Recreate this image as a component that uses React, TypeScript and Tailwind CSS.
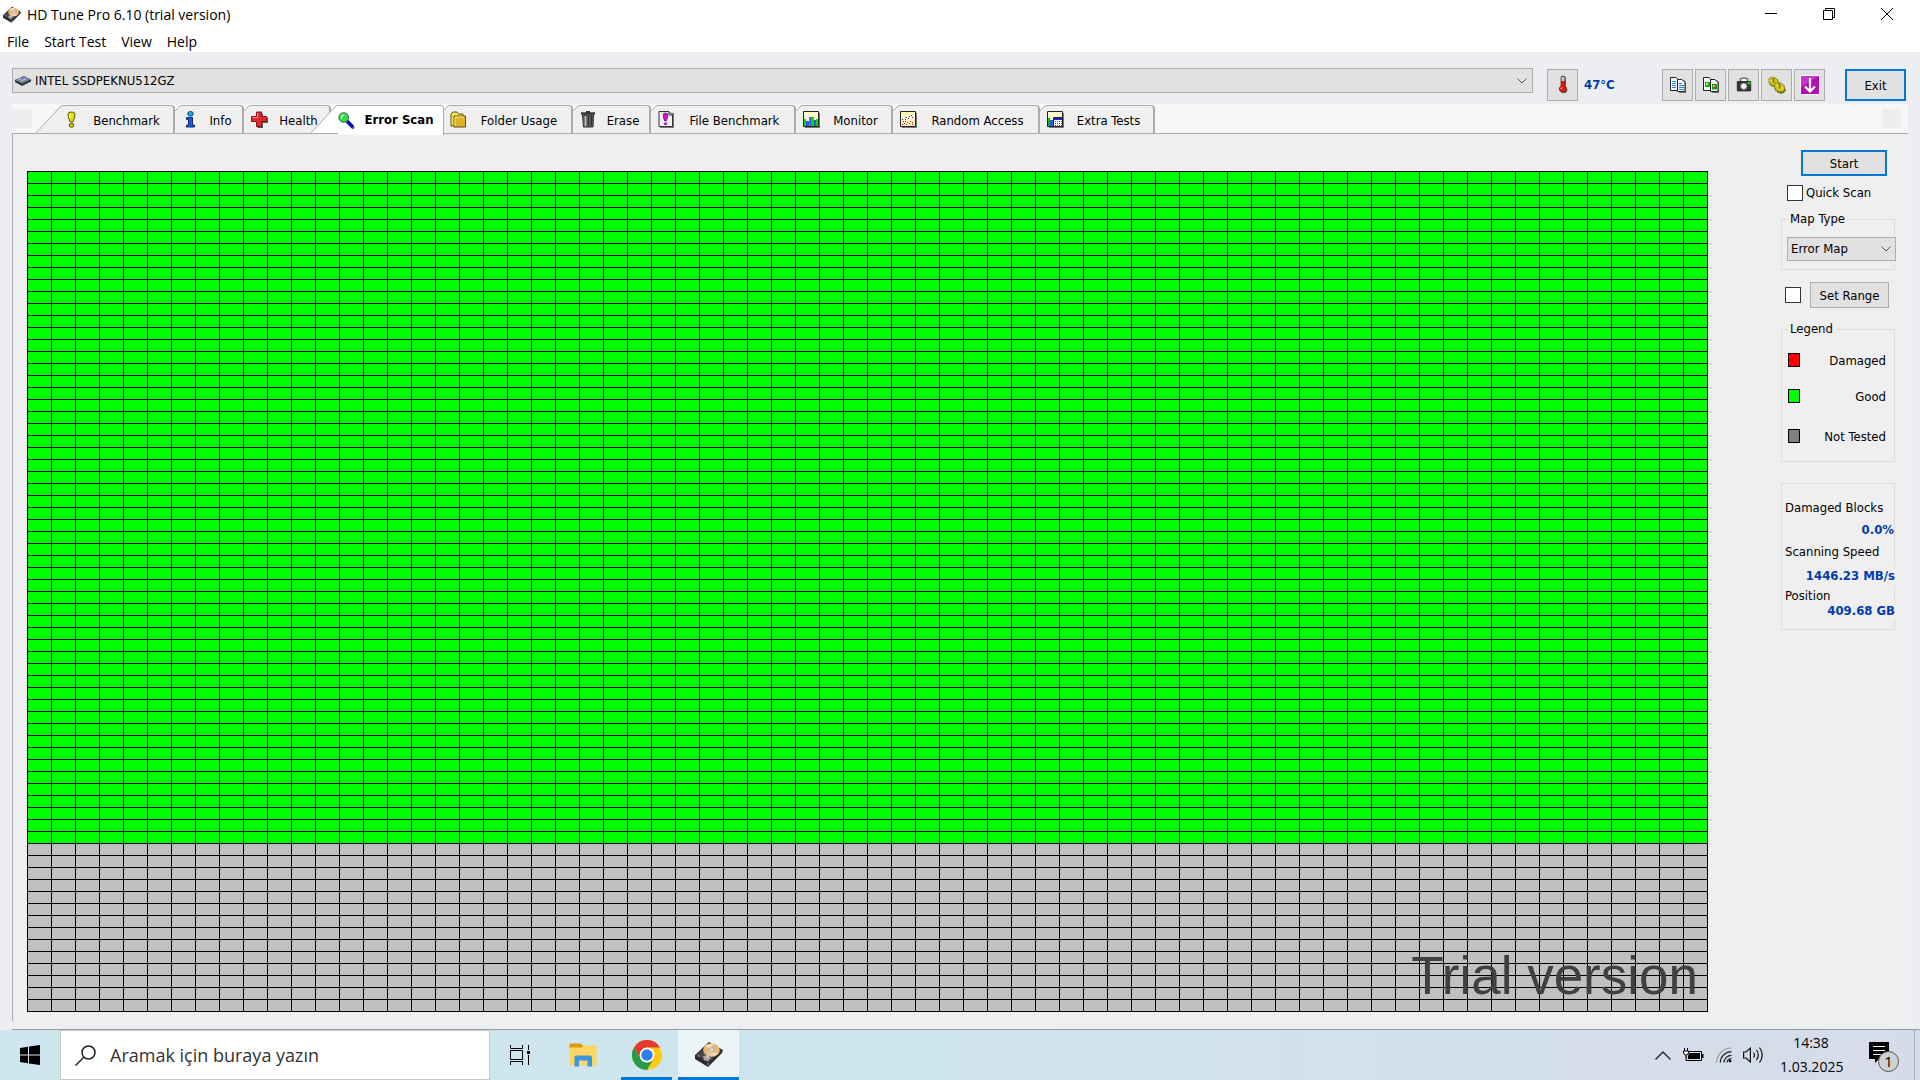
import type { ReactNode } from 'react'
import { clsx } from 'clsx'

/* ---------- Icons ---------- */

function DiskIcon({ className }: { className: string }) {
    return (
        <svg viewBox="0 0 28 26" className={className} aria-hidden="true">
            <path d="M0 14 L14 1 L28 9 L27 12 L13 26 L0 18 Z" fill="#2b2a2c" />
            <path d="M1 14 L14 2 L27 9 L13 22 Z" fill="#4a4648" />
            <ellipse cx="16.5" cy="9" rx="8.3" ry="6.6" fill="#e9b877" />
            <path d="M16.5 9 L10 5 A8.3 6.6 0 0 1 18 2.5 Z" fill="#f8dcae" />
            <path d="M16.5 9 L23 13 A8.3 6.6 0 0 1 15 15.5 Z" fill="#f6d6a0" />
            <ellipse cx="16.5" cy="9" rx="2.8" ry="2.4" fill="#d5d3d1" stroke="#9b8d80" strokeWidth="0.6" />
            <path d="M8 15 L13 14 L16 17 L13 20 L9 19 Z" fill="#a9a6a6" />
            <path d="M12 17 L15 10" stroke="#d8d8d8" strokeWidth="1.4" />
            <circle cx="3.5" cy="15" r="0.8" fill="#bbb" />
            <circle cx="13" cy="23" r="0.8" fill="#bbb" />
        </svg>
    )
}

function DriveIcon() {
    return (
        <svg viewBox="0 0 16 12" className="h-3 w-4 shrink-0" aria-hidden="true">
            <path d="M0 5 L9 1 L16 4.5 L16 6.5 L7 11 L0 7 Z" fill="#2d2f33" />
            <path d="M0 5 L9 1 L16 4.5 L7 8.5 Z" fill="#76839a" />
            <path d="M3 5 L6 3.6 M6 6 L11 3.6" stroke="#a9c0e4" strokeWidth="1.2" />
        </svg>
    )
}

function TabIcon({ children }: { children: ReactNode }) {
    return (
        <svg viewBox="0 0 17 17" className="h-[17px] w-[17px] shrink-0" aria-hidden="true">
            {children}
        </svg>
    )
}

const benchmarkIcon = (
    <TabIcon>
        <path d="M5 3 Q5 1 8.5 1 Q12 1 12 3 Q12 7 9.8 11 L7.2 11 Q5 7 5 3 Z" fill="#e4e000" stroke="#5b5a10" />
        <ellipse cx="8.5" cy="14.2" rx="2.4" ry="2" fill="#c9c400" stroke="#5b5a10" />
        <path d="M7 3 V7" stroke="#fffcb0" strokeWidth="1.4" />
    </TabIcon>
)

const infoIcon = (
    <TabIcon>
        <ellipse cx="8.5" cy="2.8" rx="2.7" ry="2.3" fill="#12b4f0" stroke="#173a68" />
        <path d="M4.5 6.5 H10.5 V14 H12.5 V16 H4.5 V14 H6.5 V8.5 H4.5 Z" fill="#0a5cf0" stroke="#122c60" />
    </TabIcon>
)

const healthIcon = (
    <TabIcon>
        <path d="M6.5 2.5 H12 V6.5 H17 V12 H12 V17 H6.5 Z" fill="#5a5a5a" />
        <path d="M5.5 1 H10.5 V5.5 H15.5 V10.5 H10.5 V15.5 H5.5 V10.5 H0.5 V5.5 H5.5 Z" fill="#e02a30" stroke="#8d1216" />
        <path d="M6.5 2 V6.5 H1.5" stroke="#f58a8a" fill="none" />
    </TabIcon>
)

const scanIcon = (
    <TabIcon>
        <path d="M9.5 10.5 L16 16.5" stroke="#666" strokeWidth="3" />
        <path d="M9 9 L15 15" stroke="#0a12b0" strokeWidth="3.4" />
        <circle cx="5.7" cy="5.5" r="4.8" fill="#35dd48" stroke="#35663b" />
        <path d="M2.5 6 Q3 2.5 6.5 2.2 L3.5 7 Z" fill="#c5ffcb" />
    </TabIcon>
)

const folderIcon = (
    <TabIcon>
        <path d="M1 3 L3 1 H7 L8.5 3 H13 V15 H1 Z" fill="#f5e860" stroke="#615212" />
        <path d="M4 5 H15.5 V16 H4 Z" fill="#ddb32a" stroke="#5c4a10" />
        <path d="M5 15 V6 H14" stroke="#fbe67a" fill="none" />
    </TabIcon>
)

const eraseIcon = (
    <TabIcon>
        <path d="M1 2.5 H15" stroke="#333" strokeWidth="2.4" />
        <path d="M6 1 H10" stroke="#333" strokeWidth="2" />
        <path d="M2.5 4 H13.5 L13 16 H3.5 Z" fill="#686868" stroke="#2e2e2e" />
        <path d="M5.5 5 V15" stroke="#c4c4c4" strokeWidth="1.4" />
        <path d="M8.5 5 V15 M11.5 5 V15" stroke="#333" strokeWidth="1.4" />
    </TabIcon>
)

const fileBenchmarkIcon = (
    <TabIcon>
        <path d="M2 2 H16 V17 H2 Z" fill="#777" />
        <path d="M1 0.5 H11 L14.5 4 V15.5 H1 Z" fill="#f2f2f2" stroke="#333" />
        <path d="M11 1 V4 H14" stroke="#333" fill="none" />
        <path d="M5.2 4 Q5.2 2 7.5 2 Q9.8 2 9.8 4 Q9.8 7 8.3 10 H6.7 Q5.2 7 5.2 4 Z" fill="#d010cf" stroke="#5d0c5d" strokeWidth="0.7" />
        <ellipse cx="7.5" cy="12.8" rx="1.8" ry="1.2" fill="#b00caf" />
    </TabIcon>
)

const monitorIcon = (
    <TabIcon>
        <path d="M2 2 H17 V17 H2 Z" fill="#777" />
        <path d="M0.5 0.5 H15.5 V15.5 H0.5 Z" fill="#fffbd0" stroke="#222" />
        <path d="M1 8 H3 V11 H6 V15 H1 Z" fill="#00e000" />
        <path d="M3 10 H6 V15 H3 Z" fill="#3454f0" />
        <path d="M6 6 H11 V15 H6 Z" fill="#00e000" />
        <path d="M7 6 H8 V15 H7 Z M11 9 H13 V15 H11 Z" fill="#3454f0" />
        <path d="M13 8 H15 V15 H13 Z" fill="#00e000" />
    </TabIcon>
)

const randomIcon = (
    <TabIcon>
        <path d="M2 2 H17 V17 H2 Z" fill="#777" />
        <path d="M0.5 0.5 H15.5 V15.5 H0.5 Z" fill="#fff6c0" stroke="#222" />
        <path d="M2 8.500 H3 M3 10.500 H4 M5 8.500 H6 M6 6.500 H7 M8 7.500 H9 M9 5.500 H10 M11 4.500 H12 M12 6.500 H13 M5 10.500 H6" stroke="#2020f0" />
        <path d="M2 13.500 H3 M4 12.500 H5 M6 13.500 H7 M7 11.500 H8 M9 12.500 H10 M10 10.500 H11 M12 11.500 H13 M12 13.500 H13" stroke="#f01010" />
    </TabIcon>
)

const extraIcon = (
    <TabIcon>
        <path d="M2 2 H17 V17 H2 Z" fill="#777" />
        <path d="M0.5 0.5 H15.5 V15.5 H0.5 Z" fill="#fffbd0" stroke="#222" />
        <path d="M1 7 H3 V15 H1 Z" fill="#00c800" />
        <path d="M3 9 H6 V15 H3 Z" fill="#3454f0" />
        <path d="M6.5 6.5 H15.5 V15.5 H6.5 Z" fill="#fff" stroke="#222" />
        <path d="M7 7 H15 V9 H7 Z" fill="#1a24e0" />
        <path d="M8 10.500 H15 M8 12.500 H15 M8 14.500 H15" stroke="#e02020" strokeDasharray="1 1" />
    </TabIcon>
)

function ToolIcon({ children }: { children: ReactNode }) {
    return (
        <svg viewBox="0 0 20 20" className="h-5 w-5" aria-hidden="true">
            {children}
        </svg>
    )
}

const thermometerIcon = (
    <ToolIcon>
        <path d="M9 3 Q9 1.5 11 1.5 Q13 1.5 13 3 V12 Q15 13.5 14.4 16 Q13.5 18.3 11 18.3 Q7 18 7 15 Q7 13 9 12 Z" fill="#666" />
        <path d="M8 2.5 Q8 1 10 1 Q12 1 12 2.5 V11 Q14 12.5 13.5 15 Q12.6 17.3 10 17.3 Q6.5 17 6.2 14 Q6.2 12 8 11 Z" fill="#f01010" stroke="#442" strokeWidth="0.8" />
        <path d="M8.6 2 H11.4 V6 H8.6 Z" fill="#7fe6ea" />
        <path d="M8 14 L9 12.5" stroke="#ffd0d0" strokeWidth="1.2" />
    </ToolIcon>
)

const copyTextIcon = (
    <ToolIcon>
        <path d="M2.5 2.5 H8 L10.5 5 V15.5 H2.5 Z" fill="#f4faff" stroke="#222" />
        <path d="M4 6.5 H8 M4 8.5 H8 M4 10.5 H8 M4 12.5 H8" stroke="#1f7fe0" />
        <path d="M10 5 L16 5 L18 7 V18 H11" fill="#777" />
        <path d="M9.5 4.5 H14 L17 7.5 V16.5 H9.5 Z" fill="#f4faff" stroke="#222" />
        <path d="M11 8.5 H14 M11 10.5 H16 M11 12.5 H16 M11 14.5 H16" stroke="#1f7fe0" />
    </ToolIcon>
)

const copyImageIcon = (
    <ToolIcon>
        <path d="M2.5 2.5 H8 L10.5 5 V15.5 H2.5 Z" fill="#f4faff" stroke="#222" />
        <path d="M4 7 H9 V12 H4 Z" fill="#12b41a" />
        <path d="M5 8 H7 V10 H5 Z" fill="#e8e020" />
        <path d="M10 5 L16 5 L18 7 V18 H11" fill="#777" />
        <path d="M9.5 4.5 H14 L17 7.5 V16.5 H9.5 Z" fill="#f4faff" stroke="#222" />
        <path d="M11 9 H16 V14.5 H11 Z" fill="#12a01a" />
        <path d="M12 10 H14 V12 H12 Z" fill="#f0c020" />
        <path d="M13 12 H14 V13 H13 Z" fill="#e02010" />
    </ToolIcon>
)

const cameraIcon = (
    <ToolIcon>
        <path d="M2 6.5 H6 V3.5 Q6 2 10 2 Q14 2 14 3.5 V6.5 H18 V17 H2 Z" fill="#fff" />
        <path d="M6.5 6 V4 Q10 1.8 13.5 4 V6" fill="none" stroke="#555" strokeWidth="1.4" />
        <rect x="2.7" y="6" width="14.6" height="10.4" rx="1" fill="#333" />
        <circle cx="9.8" cy="11.3" r="3.2" fill="#f4f4f4" stroke="#777" />
        <rect x="13.5" y="7" width="3" height="2.4" fill="#13d313" />
    </ToolIcon>
)

const optionsIcon = (
    <ToolIcon>
        <ellipse cx="7" cy="7.500" rx="5" ry="4" transform="rotate(35 7 7.500)" fill="#77730c" stroke="#5c570c" strokeDasharray="2 1" />
        <ellipse cx="6.500" cy="6.500" rx="5" ry="4" transform="rotate(35 6.500 6.500)" fill="#d0c810" stroke="#77730c" strokeDasharray="1.500 1" />
        <ellipse cx="13" cy="13.500" rx="5.500" ry="4.200" transform="rotate(35 13 13.500)" fill="#77730c" stroke="#5c570c" strokeDasharray="2 1" />
        <ellipse cx="12.500" cy="12.300" rx="5.500" ry="4.200" transform="rotate(35 12.500 12.300)" fill="#d0c810" stroke="#77730c" strokeDasharray="1.500 1" />
        <path d="M6.5 3 V8 M12.5 8 V13.500" stroke="#6c6c60" strokeWidth="1.6" />
        <path d="M3.5 6 H5 M9.5 11 H11 M14.5 13 H16" stroke="#fff9a0" strokeWidth="1.2" />
    </ToolIcon>
)

const saveIcon = (
    <ToolIcon>
        <rect x="0.5" y="0.5" width="19" height="19" rx="1" fill="#b40fb4" stroke="#fff" />
        <path d="M1 1 H19 L1 12 Z" fill="#c836c8" />
        <path d="M10 3 V16 M5 11.5 L10 16.5 L15 11.5" stroke="#fff" strokeWidth="2.2" fill="none" />
    </ToolIcon>
)

/* ---------- Data ---------- */

interface Tab {
    label: string
    icon: ReactNode
    width: string
    slanted?: boolean
    active?: boolean
}

const tabs: Tab[] = [
    { label: 'Benchmark', icon: benchmarkIcon, width: 'w-[139px]', slanted: true },
    { label: 'Info', icon: infoIcon, width: 'w-[69px]' },
    { label: 'Health', icon: healthIcon, width: 'w-[87px]' },
    { label: 'Error Scan', icon: scanIcon, width: 'w-[133px]', slanted: true, active: true },
    { label: 'Folder Usage', icon: folderIcon, width: 'w-[130px]' },
    { label: 'Erase', icon: eraseIcon, width: 'w-[78px]' },
    { label: 'File Benchmark', icon: fileBenchmarkIcon, width: 'w-[145px]' },
    { label: 'Monitor', icon: monitorIcon, width: 'w-[97px]' },
    { label: 'Random Access', icon: randomIcon, width: 'w-[147px]' },
    { label: 'Extra Tests', icon: extraIcon, width: 'w-[115px]' },
]

const tools = [
    { label: 'Copy text', icon: copyTextIcon },
    { label: 'Copy screenshot', icon: copyImageIcon },
    { label: 'Save screenshot', icon: cameraIcon },
    { label: 'Options', icon: optionsIcon },
    { label: 'Save results', icon: saveIcon },
]

const CELL_W = 24
const CELL_H = 12
const GOOD_ROWS = 56

/* ---------- Window chrome ---------- */

function TitleBar() {
    return (
        <header className="bg-white font-['Open_Sans','Noto_Sans',sans-serif] text-sm">
            <div className="flex h-7 items-center pl-[3px]">
                <DiskIcon className="h-[17px] w-[18px]" />
                <h1 className="ml-1.5 flex-1 pt-0.5">HD Tune Pro 6.10 (trial version)</h1>
                <div className="flex self-stretch">
                    <button aria-label="Minimize" className="flex w-[58px] items-center justify-center">
                        <svg viewBox="0 0 12 12" className="h-3 w-3"><path d="M0 5.5 H12" stroke="#000" /></svg>
                    </button>
                    <button aria-label="Restore" className="flex w-[58px] items-center justify-center">
                        <svg viewBox="0 0 12 12" className="h-3 w-3" fill="none" stroke="#000">
                            <path d="M0.5 2.5 H9.5 V11.5 H0.5 Z M2.5 2.5 V0.5 H11.5 V9.5 H9.5" />
                        </svg>
                    </button>
                    <button aria-label="Close" className="mr-1 flex w-[58px] items-center justify-center">
                        <svg viewBox="0 0 12 12" className="h-3 w-3"><path d="M0 0 L12 12 M12 0 L0 12" stroke="#000" /></svg>
                    </button>
                </div>
            </div>
            <nav className="flex h-6 items-start gap-[15px] pl-[7px] leading-7">
                <button>File</button>
                <button>Start Test</button>
                <button>View</button>
                <button>Help</button>
            </nav>
        </header>
    )
}

function Toolbar() {
    return (
        <div className="flex items-start pt-4 pr-3.5 pb-[3px] pl-3">
            <button aria-label="Drive" className="flex h-[25px] flex-1 items-center border border-[#adadad] bg-[#e1e1e1] pr-1 pl-0.5">
                <DriveIcon />
                <span className="ml-1 flex-1 text-left">INTEL SSDPEKNU512GZ</span>
                <Chevron />
            </button>
            <button aria-label="Temperature" className="mt-px ml-3.5 flex h-8 w-[31px] items-center justify-center border border-[#adadad] bg-[#e1e1e1]">
                {thermometerIcon}
            </button>
            <span className="mt-px ml-1.5 w-[78px] text-[13px] leading-8 font-bold text-[#003caa]">47°C</span>
            <div className="mt-px flex gap-0.5">
                {tools.map((tool) => (
                    <button
                        key={tool.label}
                        aria-label={tool.label}
                        className="flex h-8 w-[31px] items-center justify-center border border-[#adadad] bg-[#e1e1e1]"
                    >
                        {tool.icon}
                    </button>
                ))}
            </div>
            <button className="mt-px ml-5 h-8 w-[61px] border-2 border-[#0078d7] bg-[#e1e1e1] pt-0.5">Exit</button>
        </div>
    )
}

function Chevron() {
    return (
        <svg viewBox="0 0 12 8" className="h-2 w-3 shrink-0" aria-hidden="true">
            <path d="M1.5 1.5 L6 6 L10.5 1.5" stroke="#555" fill="none" />
        </svg>
    )
}

function TabStrip() {
    return (
        <div className="mx-3 flex h-[30px] items-end border-b border-[#acacac] bg-[#f7f7f7]">
            <span className="mr-1 mb-[5px] h-[19px] w-5 bg-[#edeef0]" />
            <div role="tablist" className="flex flex-1">
                {tabs.map((tab) => (
                    <button
                        key={tab.label}
                        role="tab"
                        aria-selected={!!tab.active}
                        className={clsx(
                            'flex h-7 shrink-0 items-stretch',
                            tab.width,
                            tab.active && 'relative -mr-px -mb-0.5 -ml-5 h-[30px] font-bold',
                        )}
                    >
                        {tab.slanted ? (
                            <svg viewBox="0 0 27 28" className="h-7 w-[27px] shrink-0" aria-hidden="true">
                                <path d="M0 28 L24 2 Q25.500 0.500 27 0.500 V28 Z" fill={tab.active ? '#fff' : '#efefef'} />
                                <path d="M0 28 L24 2 Q25.500 0.500 27 0.500" fill="none" stroke="#acacac" />
                            </svg>
                        ) : (
                            <svg viewBox="0 0 7 28" className="h-7 w-[7px] shrink-0" aria-hidden="true">
                                <path d="M0 28 V6 L5 1 L7 0.500 V28 Z" fill="#efefef" />
                                <path d="M0 6 L5 1 L7 0.500" fill="none" stroke="#acacac" />
                            </svg>
                        )}
                        <span
                            className={clsx(
                                'flex flex-1 items-center rounded-tr-sm border-t border-[#acacac]',
                                tab.active ? 'border-r bg-white pb-px' : 'border-r-2 bg-[#efefef]',
                            )}
                        >
                            {tab.icon}
                            <span className={clsx('flex-1 text-center whitespace-nowrap', !tab.active && 'pt-0.5')}>
                                {tab.label}
                            </span>
                        </span>
                    </button>
                ))}
            </div>
            <span className="mr-[7px] mb-[5px] h-[19px] w-[19px] bg-[#edeef0]" />
        </div>
    )
}

/* ---------- Error scan panel ---------- */

function ErrorMap() {
    return (
        <div className="relative min-h-[841px] flex-1">
            {/* block map */}
            <svg className="absolute inset-0 h-full w-full" role="img" aria-label="Error map">
                <defs>
                    <pattern id="cells" width={CELL_W} height={CELL_H} patternUnits="userSpaceOnUse">
                        <path d="M0 0 H24 V1 H1 V12 H0 Z" fill="#000" />
                    </pattern>
                </defs>
                <rect width="100%" height="100%" fill="#c0c0c0" />
                <rect width="100%" height={GOOD_ROWS * CELL_H} fill="#00ff00" />
                <rect width="100%" height="100%" fill="url(#cells)" />
            </svg>
            {/* watermark */}
            <p className="absolute right-2.5 bottom-1.5 font-['Liberation_Sans',Arial,sans-serif] text-[53px] leading-[60px] text-[#404040]">
                Trial version
            </p>
        </div>
    )
}

function LegendRow({ color, label }: { color: string; label: string }) {
    return (
        <li className="flex items-center justify-between">
            <span className={clsx('-mt-0.5 h-3.5 w-3 border border-black', color)} />
            {label}
        </li>
    )
}

function Sidebar() {
    return (
        <aside className="mr-[13px] ml-[73px] flex w-[114px] flex-col pt-4">
            <button className="mr-2 h-[26px] w-[86px] self-end border-2 border-[#0078d7] bg-[#e1e1e1] pt-px">Start</button>
            <label className="mt-[7px] ml-1.5 flex items-center gap-[3px] leading-5">
                <input type="checkbox" className="h-4 w-4 appearance-none border border-[#333] bg-white" />
                Quick Scan
            </label>

            <fieldset className="mt-[7px] border border-[#dcdcdc] pb-2 pl-[5px]">
                <legend className="ml-px px-0.5 leading-[18px]">
                    <label htmlFor="map-type">Map Type</label>
                </legend>
                <div className="relative mt-[9px] -mr-0.5 flex">
                    <select id="map-type" className="h-6 w-full appearance-none border border-[#adadad] bg-[#e1e1e1] pl-[3px]">
                        <option>Error Map</option>
                    </select>
                    <span className="pointer-events-none absolute top-2 right-1 flex">
                        <Chevron />
                    </span>
                </div>
            </fieldset>

            <div className="mt-3 ml-1 flex items-center justify-between pr-1.5">
                <input type="checkbox" aria-label="Set Range" className="h-4 w-4 appearance-none border border-[#333] bg-white" />
                <button className="h-[26px] w-[79px] border border-[#adadad] bg-[#e1e1e1] pt-px">Set Range</button>
            </div>

            <fieldset className="mt-3 h-[142px] border border-[#dcdcdc] pr-2 pl-1.5">
                <legend className="px-0.5 leading-[18px]">Legend</legend>
                <ul className="mt-3.5 leading-[18px]">
                    <LegendRow color="bg-[#ff0000]" label="Damaged" />
                    <li aria-hidden="true" className="h-[18px]" />
                    <LegendRow color="bg-[#00ff00]" label="Good" />
                    <li aria-hidden="true" className="h-[22px]" />
                    <LegendRow color="bg-[#808080]" label="Not Tested" />
                </ul>
            </fieldset>

            <dl className="mt-[21px] h-[147px] border border-[#dcdcdc] pt-3.5 pl-[3px] leading-5">
                <dt>Damaged Blocks</dt>
                <dd className="mt-0.5 text-right text-[13px] font-bold text-[#003caa]">0.0%</dd>
                <dt className="mt-0.5">Scanning Speed</dt>
                <dd className="-mr-px mt-1 bg-[#efefef] text-right text-[13px] font-bold text-[#003caa]">1446.23 MB/s</dd>
                <dt className="h-[17px]">Position</dt>
                <dd className="-mr-px bg-[#efefef] text-right text-[13px] leading-4 font-bold text-[#003caa]">409.68 GB</dd>
            </dl>
        </aside>
    )
}

/* ---------- Taskbar ---------- */

function Taskbar() {
    return (
        <footer className="flex h-[50px] bg-linear-to-r from-[#cfe6ee] via-[#cfe5ed] to-[#d6dbe8] font-['Open_Sans','Noto_Sans',sans-serif]">
            <button aria-label="Start" className="flex w-[60px] items-center justify-center">
                <svg viewBox="0 0 20 20" className="h-5 w-5">
                    <path d="M0 3 L8 1.800 V9.500 H0 Z M9 1.600 L20 0 V9.500 H9 Z M0 10.500 H8 V18.200 L0 17 Z M9 10.500 H20 V20 L9 18.400 Z" />
                </svg>
            </button>
            <label className="flex w-[430px] items-center border border-[#c5c9cb] bg-white pl-3.5">
                <svg viewBox="0 0 21 21" className="h-[21px] w-[21px] shrink-0" fill="none" stroke="#222" strokeWidth="1.5">
                    <circle cx="13.500" cy="7.500" r="6.500" />
                    <path d="M9 12 L0.500 20.500" />
                </svg>
                <input
                    type="text"
                    aria-label="Search"
                    placeholder="Aramak için buraya yazın"
                    className="ml-3.5 min-w-0 flex-1 bg-transparent text-lg placeholder:text-[#333]"
                />
            </label>
            <button aria-label="Task view" className="flex w-[60px] items-center justify-center">
                <svg viewBox="0 0 20 20" className="h-5 w-5" fill="none" stroke="#000">
                    <path d="M0.500 0 V3.500 H12.500 V0 M0.500 5.500 H12.500 V14.500 H0.500 Z M0.500 20 V16.500 H12.500 V20 M18.500 0 V5 M18.500 10 V20" />
                    <path d="M17 6 H20 V9 H17 Z" fill="#000" stroke="none" />
                </svg>
            </button>
            <button aria-label="File Explorer" className="ml-px flex w-16 items-center justify-center">
                <svg viewBox="0 0 28 24" className="h-6 w-7">
                    <path d="M0.500 1.500 Q0.500 0.500 1.500 0.500 H12 L14 3 V6 H0.500 Z" fill="#dc9a07" />
                    <path d="M0.500 4.500 H13 L15 2.500 H26.500 Q27.500 2.500 27.500 3.500 V22.500 H0.500 Z" fill="#ffd563" />
                    <path d="M5.500 23.500 V14.500 Q5.500 12.500 7.500 12.500 H21 Q23 12.500 23 14.500 V23.500 H18.500 V17.500 H10 V23.500 Z" fill="#3a96dd" />
                </svg>
            </button>
            <button aria-label="Google Chrome" className="ml-1.5 flex w-[51px] items-center justify-center border-b-3 border-[#0078d7] pt-[3px]">
                <svg viewBox="0 0 30 30" className="h-[30px] w-[30px]">
                    <circle cx="15" cy="15" r="15" fill="#ffc915" />
                    <path d="M2 7.500 A15 15 0 0 1 28 7.500 H15 L8.500 18.700 Z" fill="#e33b2e" />
                    <path d="M2 7.500 L8.500 18.700 A7.500 7.500 0 0 0 15 22.500 L21.500 18.800 L15 30 A15 15 0 0 1 2 7.500 Z" fill="#249a4a" />
                    <circle cx="15" cy="15" r="7.400" fill="#fff" />
                    <circle cx="15" cy="15" r="5.700" fill="#2f7ceb" />
                </svg>
            </button>
            <button aria-label="HD Tune Pro" className="ml-1.5 flex w-[61px] items-center justify-center border-b-3 border-[#0078d7] bg-[#ecf4f8]">
                <DiskIcon className="h-[26px] w-7" />
            </button>

            {/* tray */}
            <div className="ml-auto flex items-center">
                <svg viewBox="0 0 16 9" className="h-[9px] w-4" fill="none" stroke="#222" strokeWidth="1.4">
                    <path d="M0.500 8.500 L8 1 L15.500 8.500" />
                </svg>
                <svg viewBox="0 0 21 14" className="ml-3 h-3.5 w-[21px]">
                    <path d="M4.500 3.500 H18.500 V12.500 H3.500 V8" fill="none" stroke="#000" />
                    <path d="M6 5 H17 V11 H5 V8 Z M19 6 H20.500 V10 H19 Z" />
                    <path d="M1.500 0 V3 M4.500 0 V3 M0.500 3 H5.500 V5 L4 7 H2 L0.500 5 Z M3 7 V12.500 H4" fill="#fff" stroke="#000" />
                </svg>
                <svg viewBox="0 0 16 16" className="ml-3 h-4 w-4" fill="none" stroke="#222" strokeWidth="1.2">
                    <path d="M0.600 15.500 A15 15 0 0 1 15.500 1" stroke="#999" />
                    <path d="M4.300 15.500 A11.200 11.200 0 0 1 15.500 4.600 M8 15.500 A7.500 7.500 0 0 1 15.500 8.300 M11 15.500 A4.500 4.500 0 0 1 15.500 11.500" />
                    <circle cx="14" cy="14" r="1.400" fill="#000" stroke="none" />
                </svg>
                <svg viewBox="0 0 21 18" className="ml-[11px] h-[18px] w-[21px]" fill="none" stroke="#111" strokeWidth="1.200">
                    <path d="M0.600 6 H3 L7.400 2 V16 L3 12 H0.600 Z M10.500 6.500 Q12.500 9 10.500 11.500 M13.500 4 Q17 9 13.500 14 M16.500 1.500 Q22 9 16.500 16.500" />
                </svg>
                <div className="ml-4 w-[62px] text-center text-sm leading-6">
                    <time className="block">14:38</time>
                    <time className="block">1.03.2025</time>
                </div>
                <button aria-label="Notifications" className="ml-[25px] flex">
                    <svg viewBox="0 0 32 34" className="h-[34px] w-8">
                        <path d="M2 4 H22 V21 H12 L8 25 V21 H2 Z" />
                        <path d="M6 8.500 H18 M6 12.500 H18 M6 16.500 H14" stroke="#fff" />
                        <circle cx="21.500" cy="23.500" r="10" fill="#cfd0d3" stroke="#555" />
                        <text x="21.500" y="29" textAnchor="middle" fontSize="15" fill="#000">1</text>
                    </svg>
                </button>
                <span className="ml-[15px] h-[50px] w-1.5 border-l border-[#a5adb8]" />
            </div>
        </footer>
    )
}

export default function App() {
    return (
        <div className="flex min-h-screen flex-col bg-[#edeef1] text-black">
            <TitleBar />
            <main className="flex flex-1 flex-col font-['DejaVu_Sans_Condensed','Noto_Sans',sans-serif] text-[13px]">
                <Toolbar />
                <TabStrip />
                <section className="mx-3 flex flex-1 border-l border-[#acacac] bg-[#efefef]">
                    <div className="flex flex-1 pt-[37px] pb-[9px] pl-3.5">
                        <ErrorMap />
                    </div>
                    <Sidebar />
                </section>
                <div className="ml-3 h-[9px] border-b border-[#9c9c9c]" />
            </main>
            <Taskbar />
        </div>
    )
}
